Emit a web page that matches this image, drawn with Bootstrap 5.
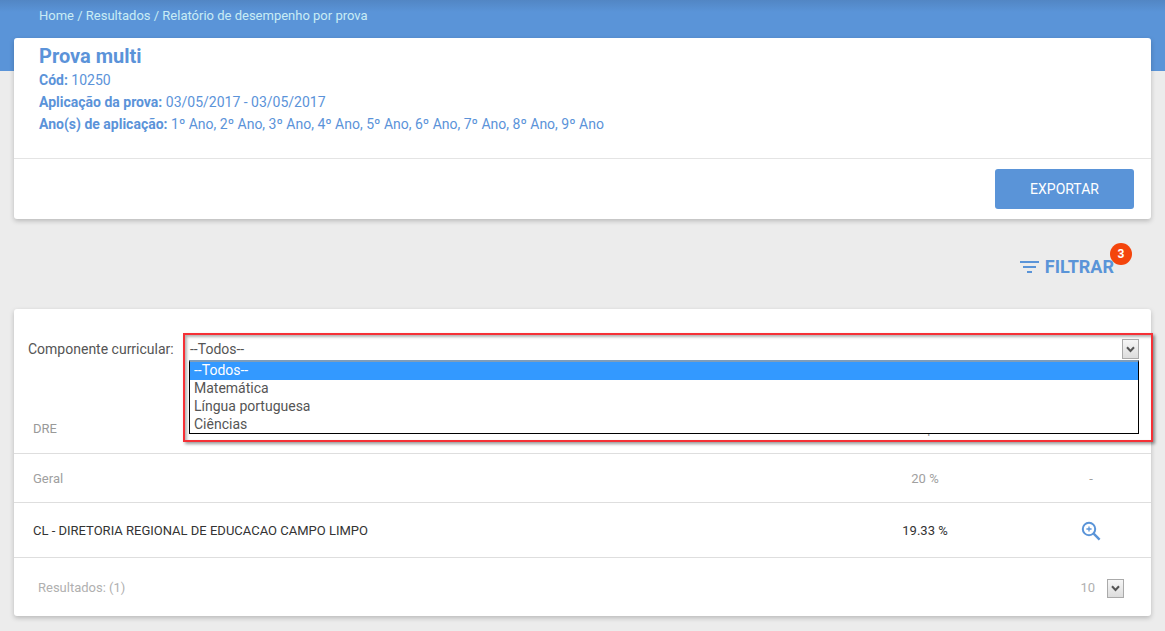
<!DOCTYPE html>
<html lang="pt">
<head>
<meta charset="utf-8">
<title>Relatório de desempenho por prova</title>
<link rel="stylesheet" href="https://cdn.jsdelivr.net/npm/bootstrap@5.3.0/dist/css/bootstrap.min.css">
<style>
html,body{height:631px;overflow:hidden}
body{background:#ececec;font-family:Roboto,"Liberation Sans",sans-serif;font-size:13px;color:#666}
.topband{height:71px;background:linear-gradient(#5286c4,#5a94d8 12px);color:#c9ecf5;padding:8px 39px 0;font-size:13px;line-height:15px}
.sheet{background:#fff;border-radius:3px;box-shadow:0 2px 5px rgba(0,0,0,.22);margin-left:14px;margin-right:14px}
.sheet-info{margin-top:-33px;height:181px;position:relative;color:#5b93d9}
.info-body{height:121px;padding:6px 25px 0;border-bottom:1px solid #e4e4e4;font-size:14px;line-height:22px}
.info-title{font-size:20px;font-weight:700;line-height:24px;margin:0 0 1px}
.info-body b{font-weight:700}
.info-foot{padding:10px 17px 0 0}
.btn-exportar{width:139px;height:40px;background:#5a94d8;border:0;border-radius:3px;color:#fff;font-size:14px}
.filter-row{height:90px;padding:26px 51px 0 0}
.filter-link{position:relative;color:#5a94d8;font-size:18px;font-weight:700;line-height:24px;margin-top:10px}
.filter-link svg{margin-right:6px;vertical-align:-1px}
.filter-count{position:absolute;top:-12px;right:-18px;width:22px;height:22px;border-radius:50%;background:#f4450c;color:#fff;font-size:12px;font-weight:700;line-height:22px;text-align:center}
.sheet-table{height:307px;position:relative;font-size:13px}
.row-head{height:145px;border-bottom:1px solid #dedede;color:#999;padding:0 19px 15px}
.data-row{border-bottom:1px solid #dedede;padding:1px 19px 0}
.row-geral{height:49px;color:#a0a0a0}
.row-cl{height:55px;color:#333}
.col-name{flex:1 1 auto}
.col-pct{width:90px;text-align:center;margin-right:99px;flex:none}
.col-act{width:44px;text-align:center;flex:none;margin-right:19px}
.row-foot{height:58px;color:#b0b0b0;padding:2px 27px 0 24px}
.foot-size{margin-right:12px}
.arrow-box{width:17px;height:19px;border:1px solid #aaa;background:linear-gradient(#f6f6f6,#dddddd);display:flex;align-items:center;justify-content:center}
.label-comp{position:absolute;left:14px;top:31px;font-size:14px;line-height:18px;color:#555}
.highlight{position:absolute;left:169px;top:24px;width:970px;height:109px;border:2px solid #f53036;box-shadow:2px 2px 3px rgba(0,0,0,.4),inset 2px 2px 3px rgba(0,0,0,.3)}
.sel-value{height:25px;padding:0 12px 0 5px;font-size:14px;line-height:28px;color:#555}
.sel-list{margin:0 12px 0 4px;border:1px solid #000;border-top:2px solid #7f9db9;background:#fff;font-size:14px;line-height:17px;color:#555;height:74px}
.sel-list div{padding-left:4px;height:18px}
.sel-list .picked{background:#3399ff;color:#fff}
.highlight .arrow-box{margin-top:4px;height:20px}
</style>
</head>
<body>
<div class="topband">Home / Resultados / Relatório de desempenho por prova</div>

<section class="sheet sheet-info">
  <div class="info-body">
    <h1 class="info-title">Prova multi</h1>
    <div><b>Cód:</b> 10250</div>
    <div><b>Aplicação da prova:</b> 03/05/2017 - 03/05/2017</div>
    <div><b>Ano(s) de aplicação:</b> 1º Ano, 2º Ano, 3º Ano, 4º Ano, 5º Ano, 6º Ano, 7º Ano, 8º Ano, 9º Ano</div>
  </div>
  <div class="info-foot d-flex justify-content-end">
    <button type="button" class="btn btn-exportar">EXPORTAR</button>
  </div>
</section>

<div class="filter-row d-flex justify-content-end">
  <div class="filter-link">
    <svg width="19" height="14" viewBox="0 0 19 14" fill="#5a94d8"><rect x="0" y="1" width="19" height="2"/><rect x="3" y="6" width="13" height="2"/><rect x="7" y="11" width="5" height="2"/></svg>FILTRAR
    <span class="filter-count">3</span>
  </div>
</div>

<section class="sheet sheet-table">
  <div class="row-head d-flex align-items-end">
    <div class="col-name">DRE</div>
    <div class="col-pct">Desempenho</div>
    <div class="col-act"></div>
  </div>
  <div class="data-row row-geral d-flex align-items-center">
    <div class="col-name">Geral</div>
    <div class="col-pct">20 %</div>
    <div class="col-act">-</div>
  </div>
  <div class="data-row row-cl d-flex align-items-center">
    <div class="col-name">CL - DIRETORIA REGIONAL DE EDUCACAO CAMPO LIMPO</div>
    <div class="col-pct">19.33 %</div>
    <div class="col-act">
      <svg width="20" height="20" viewBox="0 0 20 20" fill="none" stroke="#5a94d8"><circle cx="8" cy="8" r="6.2" stroke-width="2"/><path d="M12.7 12.7 18.6 18.6" stroke-width="2.4"/><path d="M5.4 8h5.2M8 5.4v5.2" stroke-width="1.3"/></svg>
    </div>
  </div>
  <div class="row-foot d-flex align-items-center justify-content-between">
    <div>Resultados: (1)</div>
    <div class="d-flex align-items-center">
      <span class="foot-size">10</span>
      <span class="arrow-box"><svg width="9" height="7" viewBox="0 0 9 7" fill="none" stroke="#555" stroke-width="2"><path d="M1 1.2 4.5 5 8 1.2"/></svg></span>
    </div>
  </div>

  <div class="label-comp">Componente curricular:</div>
  <div class="highlight">
    <div class="sel-value d-flex justify-content-between">
      <span>--Todos--</span>
      <span class="arrow-box"><svg width="9" height="7" viewBox="0 0 9 7" fill="none" stroke="#555" stroke-width="2"><path d="M1 1.2 4.5 5 8 1.2"/></svg></span>
    </div>
    <div class="sel-list">
      <div class="picked">--Todos--</div>
      <div>Matemática</div>
      <div>Língua portuguesa</div>
      <div>Ciências</div>
    </div>
  </div>
</section>
</body>
</html>
